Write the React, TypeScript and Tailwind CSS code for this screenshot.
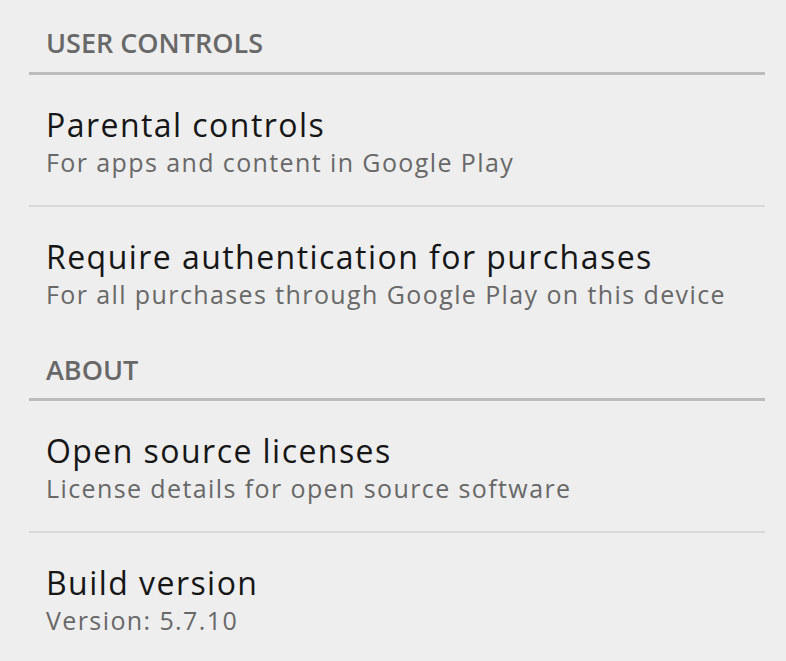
const font = { fontFamily: '"Open Sans", "Liberation Sans", sans-serif' };

type Item = { title: string; summary: string; divider?: boolean };

function SectionHeader({ label, first }: { label: string; first?: boolean }) {
  return (
    <div
      className={`border-b-[3px] border-[#bcbcbc] pl-[17px] ${
        first ? "pt-[28px] pb-[14px]" : "pt-[18px] pb-[13px]"
      }`}
    >
      <div className="text-[27px] leading-[30px] font-semibold text-[#686868]">{label}</div>
    </div>
  );
}

function PrefRow({ title, summary, divider }: Item) {
  return (
    <div
      className={`pl-[17px] pt-[31px] pb-[25px] ${
        divider ? "border-b-2 border-[#d8d8d8]" : ""
      }`}
    >
      <div className="text-[32px] leading-[38px] font-medium tracking-[1.45px] text-[#161616]">{title}</div>
      <div className="text-[25px] leading-[36px] tracking-[1.4px] text-[#686868]">{summary}</div>
    </div>
  );
}

export default function App() {
  const userControls: Item[] = [
    { title: "Parental controls", summary: "For apps and content in Google Play", divider: true },
    {
      title: "Require authentication for purchases",
      summary: "For all purchases through Google Play on this device",
    },
  ];

  const about: Item[] = [
    { title: "Open source licenses", summary: "License details for open source software", divider: true },
    { title: "Build version", summary: "Version: 5.7.10" },
  ];

  return (
    <div className="min-h-screen bg-[#eeeeee] pl-[29px] pr-[21px]" style={font}>
      <SectionHeader label="USER CONTROLS" first />
      {userControls.map((item) => (
        <PrefRow key={item.title} {...item} />
      ))}
      <SectionHeader label="ABOUT" />
      {about.map((item) => (
        <PrefRow key={item.title} {...item} />
      ))}
    </div>
  );
}
